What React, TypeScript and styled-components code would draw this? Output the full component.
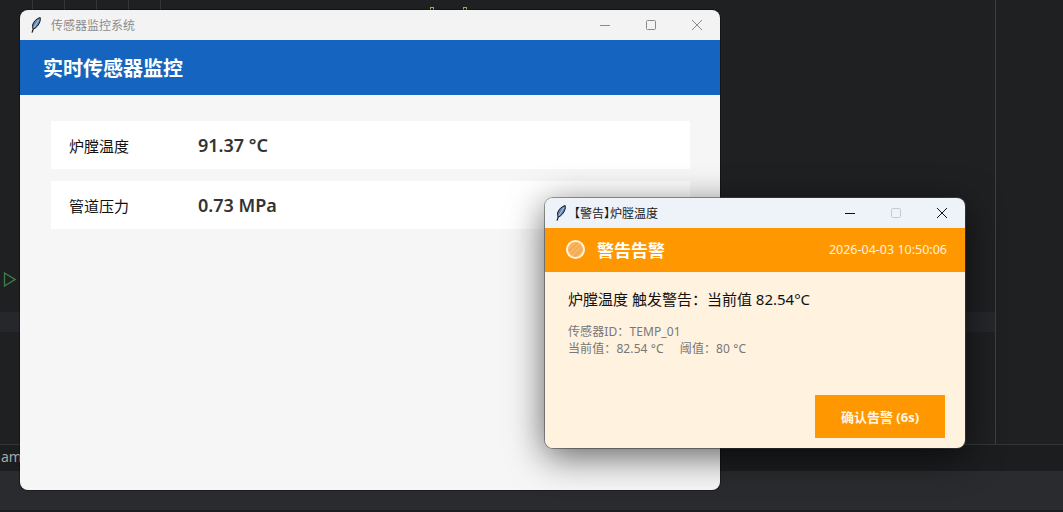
import styled, { createGlobalStyle } from "styled-components"

const FONT = `"Noto Sans", "Noto Sans CJK SC", sans-serif`

const GlobalStyle = createGlobalStyle`
  html, body {
    margin: 0;
    padding: 0;
    width: 1063px;
    height: 512px;
    overflow: hidden;
    background: #1f2022;
    font-family: ${FONT};
  }
`

const Desktop = styled.div`
  position: relative;
  width: 1063px;
  height: 512px;
  overflow: hidden;
  display: flex;
  flex-direction: column;
  background: #1f2022;
`

// dark editor sitting behind the two windows
const Editor = styled.div`
  height: 444px;
  display: flex;
`

const EditorMain = styled.div`
  width: 995px;
  display: flex;
  flex-direction: column;
  border-right: 1px solid #3e3f43;
`

const TabStrip = styled.div`
  height: 10px;
  display: flex;
  padding-left: 32px;
  flex-shrink: 0;
`

const TabTick = styled.span`
  width: 32px;
  box-sizing: border-box;
  border-left: 1px solid #35363a;
`

const CodeMark = styled.span<{ $gap: number }>`
  align-self: flex-end;
  width: 4px;
  height: 3px;
  margin-left: ${p => p.$gap}px;
  box-sizing: border-box;
  border: 1px solid #a8a24e;
  border-bottom: none;
`

const Gutter = styled.div`
  height: 302px;
  display: flex;
  align-items: flex-end;
  padding: 0 0 25px 3px;
  box-sizing: border-box;
  flex-shrink: 0;
`

const ActiveLine = styled.div`
  height: 20px;
  background: #26272b;
  flex-shrink: 0;
`

const Terminal = styled.div`
  height: 26px;
  border-top: 1px solid #35363a;
  background: #1c1d1f;
  color: #a6a7aa;
  font-size: 14px;
  line-height: 24px;
  padding-left: 1px;
`

const StatusArea = styled.div`
  flex: 1;
  background: #2a2b2e;
  border-bottom: 2px solid #1b1c1e;
`

const Window = styled.div<{ $left: number; $top: number; $w: number; $h: number; $shadow?: boolean }>`
  position: absolute;
  left: ${p => p.$left}px;
  top: ${p => p.$top}px;
  width: ${p => p.$w}px;
  height: ${p => p.$h}px;
  border-radius: 8px;
  overflow: hidden;
  display: flex;
  flex-direction: column;
  box-shadow: ${p => (p.$shadow ? "0 8px 36px rgba(0, 0, 0, 0.62), 0 0 0 1px rgba(90, 90, 90, 0.55)" : "0 0 0 1px rgba(0,0,0,0.35)")};
`

const TitleBar = styled.div<{ $bg: string }>`
  height: 30px;
  flex-shrink: 0;
  background: ${p => p.$bg};
  display: flex;
  align-items: center;
  padding-left: 9px;
`

// halt gives the half-width brackets of the reference
const TitleText = styled.span<{ $color: string; $gap: number }>`
  font-size: 12px;
  font-feature-settings: "halt";
  color: ${p => p.$color};
  margin-left: ${p => p.$gap}px;
  white-space: nowrap;
`

const Controls = styled.div`
  margin-left: auto;
  display: flex;
`

const ControlButton = styled.span<{ $color: string }>`
  width: 46px;
  height: 30px;
  display: flex;
  align-items: center;
  justify-content: center;
  color: ${p => p.$color};
`

const MainHeader = styled.div`
  height: 55px;
  flex-shrink: 0;
  background: #1565c0;
  display: flex;
  align-items: center;
  padding-left: 23px;
  color: #fff;
  font-size: 20px;
  font-weight: 700;
`

const MainBody = styled.div`
  flex: 1;
  background: #f6f6f6;
  padding: 26px 30px 0 31px;
  display: flex;
  flex-direction: column;
  gap: 12px;
`

const SensorRow = styled.div`
  height: 48px;
  background: #fff;
  display: flex;
  align-items: center;
  padding-left: 18px;
`

const SensorLabel = styled.span`
  width: 129px;
  font-size: 15px;
  color: #111;
`

const SensorValue = styled.span`
  font-size: 18px;
  font-weight: 600;
  color: #333;
`

const AlertHeader = styled.div`
  height: 44px;
  flex-shrink: 0;
  background: #ff9800;
  color: #fff;
  display: flex;
  align-items: center;
  padding: 0 18px 2px 21px;
  box-sizing: border-box;
`

const AlertDot = styled.span`
  width: 15px;
  height: 15px;
  border: 2px solid #fff3dc;
  border-radius: 50%;
  background: repeating-linear-gradient(135deg, #f9b565 0 2px, #f6aa50 2px 4px);
`

const AlertTitle = styled.span`
  margin-left: 12px;
  font-size: 17px;
  font-weight: 700;
`

const AlertTime = styled.span`
  margin-left: auto;
  font-size: 12.5px;
  color: #fff1da;
`

const AlertBody = styled.div`
  flex: 1;
  background: #fff2df;
  padding: 17px 20px 10px 23px;
  display: flex;
  flex-direction: column;
`

const AlertMessage = styled.div`
  font-size: 15px;
  line-height: 20px;
  color: #111;
`

const AlertDetail = styled.div`
  margin-top: 14px;
  font-size: 12px;
  letter-spacing: 0.1px;
  line-height: 17px;
  color: #777;
  white-space: pre;
`

const ConfirmButton = styled.div`
  margin-top: auto;
  align-self: flex-end;
  width: 130px;
  height: 43px;
  background: #ff9800;
  color: #fff5e6;
  font-size: 13px;
  font-weight: 700;
  display: flex;
  align-items: center;
  justify-content: center;
`

const Feather = () => (
  <svg width="14" height="16" viewBox="0 0 14 16">
    <path d="M3 15.6 L4.8 10.5" stroke="#111" strokeWidth="1.2" fill="none" />
    <path d="M11.2 0.6 C8 1.2 4.4 4.4 3.6 8 C3.3 10 3.6 11.6 4.4 12 C7.4 11 10 7.6 11 4.4 C11.4 3 11.5 1.6 11.2 0.6 Z" fill="#5f83b3" stroke="#141a26" strokeWidth="1" />
    <path d="M9.8 2.6 L5 10.4" stroke="#d3deee" strokeWidth="0.8" />
  </svg>
)

const Minimize = () => (
  <svg width="12" height="12" viewBox="0 0 12 12">
    <path d="M1 6.5 H11" stroke="currentColor" strokeWidth="1" />
  </svg>
)

const Maximize = () => (
  <svg width="12" height="12" viewBox="0 0 12 12">
    <rect x="1.5" y="1.5" width="9" height="9" rx="1" fill="none" stroke="currentColor" strokeWidth="1" />
  </svg>
)

const Close = () => (
  <svg width="12" height="12" viewBox="0 0 12 12">
    <path d="M1 1 L11 11 M11 1 L1 11" stroke="currentColor" strokeWidth="1" fill="none" />
  </svg>
)

const App = () => (
  <>
    <GlobalStyle />
    <Desktop>
      <Editor>
        <EditorMain>
          <TabStrip>
            {[0, 1, 2, 3, 4].map(i => (
              <TabTick key={i} />
            ))}
            <CodeMark $gap={238} />
            <CodeMark $gap={29} />
          </TabStrip>
          <Gutter>
            <svg width="13" height="15" viewBox="0 0 13 15">
              <path d="M1.5 1 L12 7.5 L1.5 14 Z" fill="none" stroke="#3f7d4c" strokeWidth="1.3" />
            </svg>
          </Gutter>
          <ActiveLine />
        </EditorMain>
      </Editor>
      <Terminal>am</Terminal>
      <StatusArea />

      <Window $left={20} $top={10} $w={700} $h={480}>
        <TitleBar $bg="#f3f3f3">
          <Feather />
          <TitleText $color="#8c8c8c" $gap={8}>传感器监控系统</TitleText>
          <Controls>
            <ControlButton $color="#8a8a8a"><Minimize /></ControlButton>
            <ControlButton $color="#8a8a8a"><Maximize /></ControlButton>
            <ControlButton $color="#8a8a8a"><Close /></ControlButton>
          </Controls>
        </TitleBar>
        <MainHeader>实时传感器监控</MainHeader>
        <MainBody>
          <SensorRow>
            <SensorLabel>炉膛温度</SensorLabel>
            <SensorValue>91.37 °C</SensorValue>
          </SensorRow>
          <SensorRow>
            <SensorLabel>管道压力</SensorLabel>
            <SensorValue>0.73 MPa</SensorValue>
          </SensorRow>
        </MainBody>
      </Window>

      <Window $left={545} $top={198} $w={420} $h={250} $shadow>
        <TitleBar $bg="#eef3f9">
          <Feather />
          <TitleText $color="#1a1a1a" $gap={6}>【警告】炉膛温度</TitleText>
          <Controls>
            <ControlButton $color="#111"><Minimize /></ControlButton>
            <ControlButton $color="#c4c8cc"><Maximize /></ControlButton>
            <ControlButton $color="#111"><Close /></ControlButton>
          </Controls>
        </TitleBar>
        <AlertHeader>
          <AlertDot />
          <AlertTitle>警告告警</AlertTitle>
          <AlertTime>2026-04-03 10:50:06</AlertTime>
        </AlertHeader>
        <AlertBody>
          <AlertMessage>炉膛温度 触发警告：当前值 82.54°C</AlertMessage>
          <AlertDetail>{"传感器ID：TEMP_01\n当前值：82.54 °C     阈值：80 °C"}</AlertDetail>
          <ConfirmButton>确认告警 (6s)</ConfirmButton>
        </AlertBody>
      </Window>
    </Desktop>
  </>
)

export default App
